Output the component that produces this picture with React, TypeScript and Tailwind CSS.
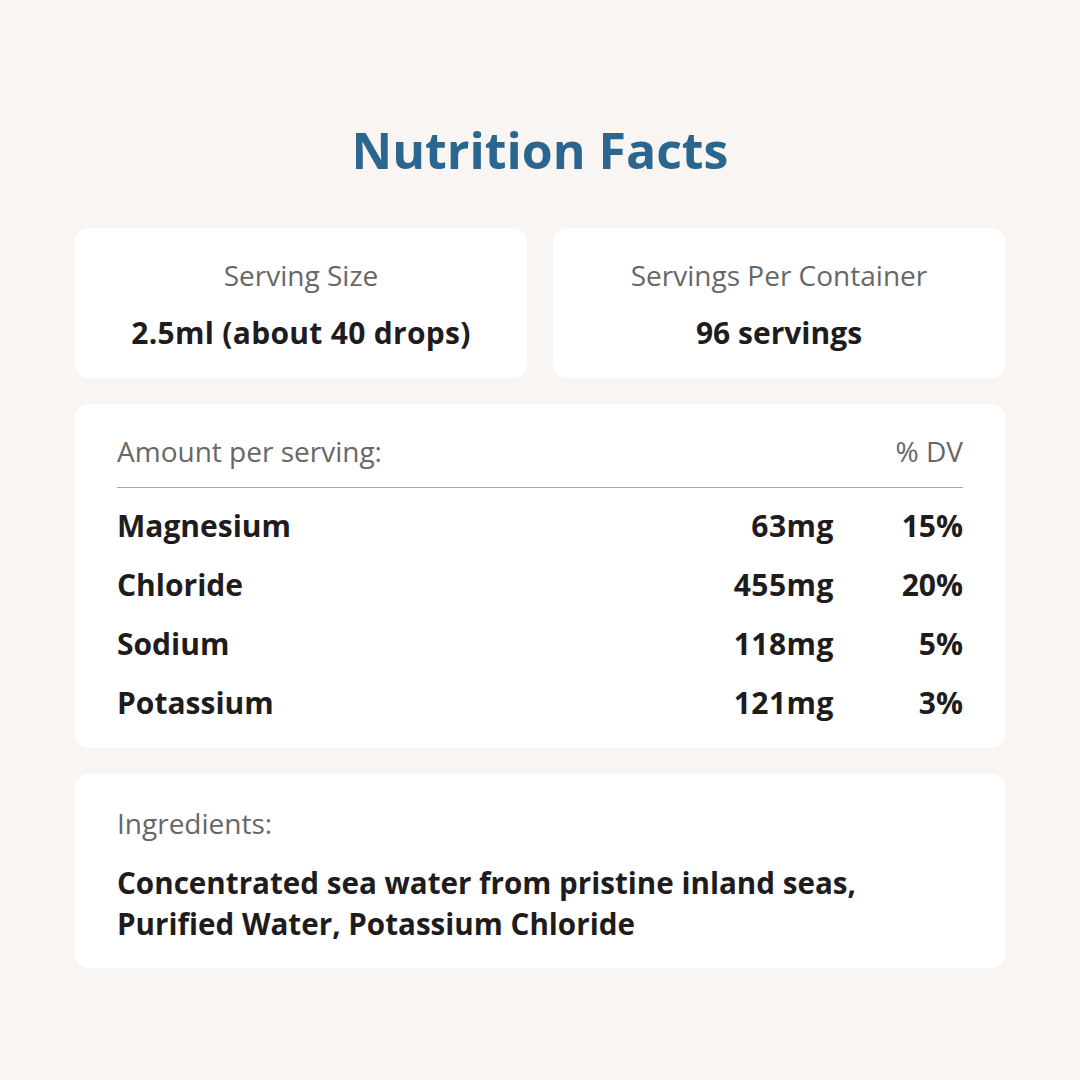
const nutrients = [
  { name: 'Magnesium', amount: '63mg', dv: '15%' },
  { name: 'Chloride', amount: '455mg', dv: '20%' },
  { name: 'Sodium', amount: '118mg', dv: '5%' },
  { name: 'Potassium', amount: '121mg', dv: '3%' }
]

export default function App() {
  return (
    <div className="w-[1080px] h-[1080px] bg-[#f8f5f2] font-['Open_Sans',sans-serif] flex flex-col items-center">
      {/* Title */}
      <h1 className="mt-[118px] text-[50px] leading-[64px] font-bold text-[#2b6690]">
        Nutrition Facts
      </h1>

      <div className="w-[930px] mt-[46px] flex flex-col gap-[26px]">
        {/* Serving cards */}
        <div className="grid grid-cols-2 gap-[26px]">
          <div className="bg-white rounded-[14px] h-[150px] flex flex-col items-center pt-[30px]">
            <p className="text-[28px] leading-[34px] text-[#676767]">Serving Size</p>
            <p className="mt-[24px] text-[30px] leading-[34px] font-bold text-[#1e1c1d] tracking-[0.3px]">2.5ml (about 40 drops)</p>
          </div>
          <div className="bg-white rounded-[14px] h-[150px] flex flex-col items-center pt-[30px]">
            <p className="text-[28px] leading-[34px] text-[#676767]">Servings Per Container</p>
            <p className="mt-[24px] text-[30px] leading-[34px] font-bold text-[#1e1c1d]">96 servings</p>
          </div>
        </div>

        {/* Nutrients */}
        <div className="bg-white rounded-[14px] h-[344px] px-[42px] pt-[30px]">
          <div className="flex justify-between text-[28px] leading-[34px] text-[#676767] pb-[19px] border-b border-[#a9a9a2]">
            <span>Amount per serving:</span>
            <span>% DV</span>
          </div>
          <div className="pt-[8px]">
            {nutrients.map(n => (
              <div key={n.name} className="flex items-center h-[59px] text-[30px] font-bold text-[#1e1c1d]">
                <span className="flex-1">{n.name}</span>
                <span className="w-[120px] text-right tracking-[0.5px]">{n.amount}</span>
                <span className="w-[129px] text-right">{n.dv}</span>
              </div>
            ))}
          </div>
        </div>

        {/* Ingredients */}
        <div className="bg-white rounded-[14px] h-[194px] px-[42px] pt-[32px]">
          <p className="text-[28px] leading-[34px] text-[#676767]">Ingredients:</p>
          <p className="mt-[22px] text-[29.6px] leading-[41px] font-bold text-[#1e1c1d]">
            Concentrated sea water from pristine inland seas,
            <br />
            Purified Water, Potassium Chloride
          </p>
        </div>
      </div>
    </div>
  )
}
